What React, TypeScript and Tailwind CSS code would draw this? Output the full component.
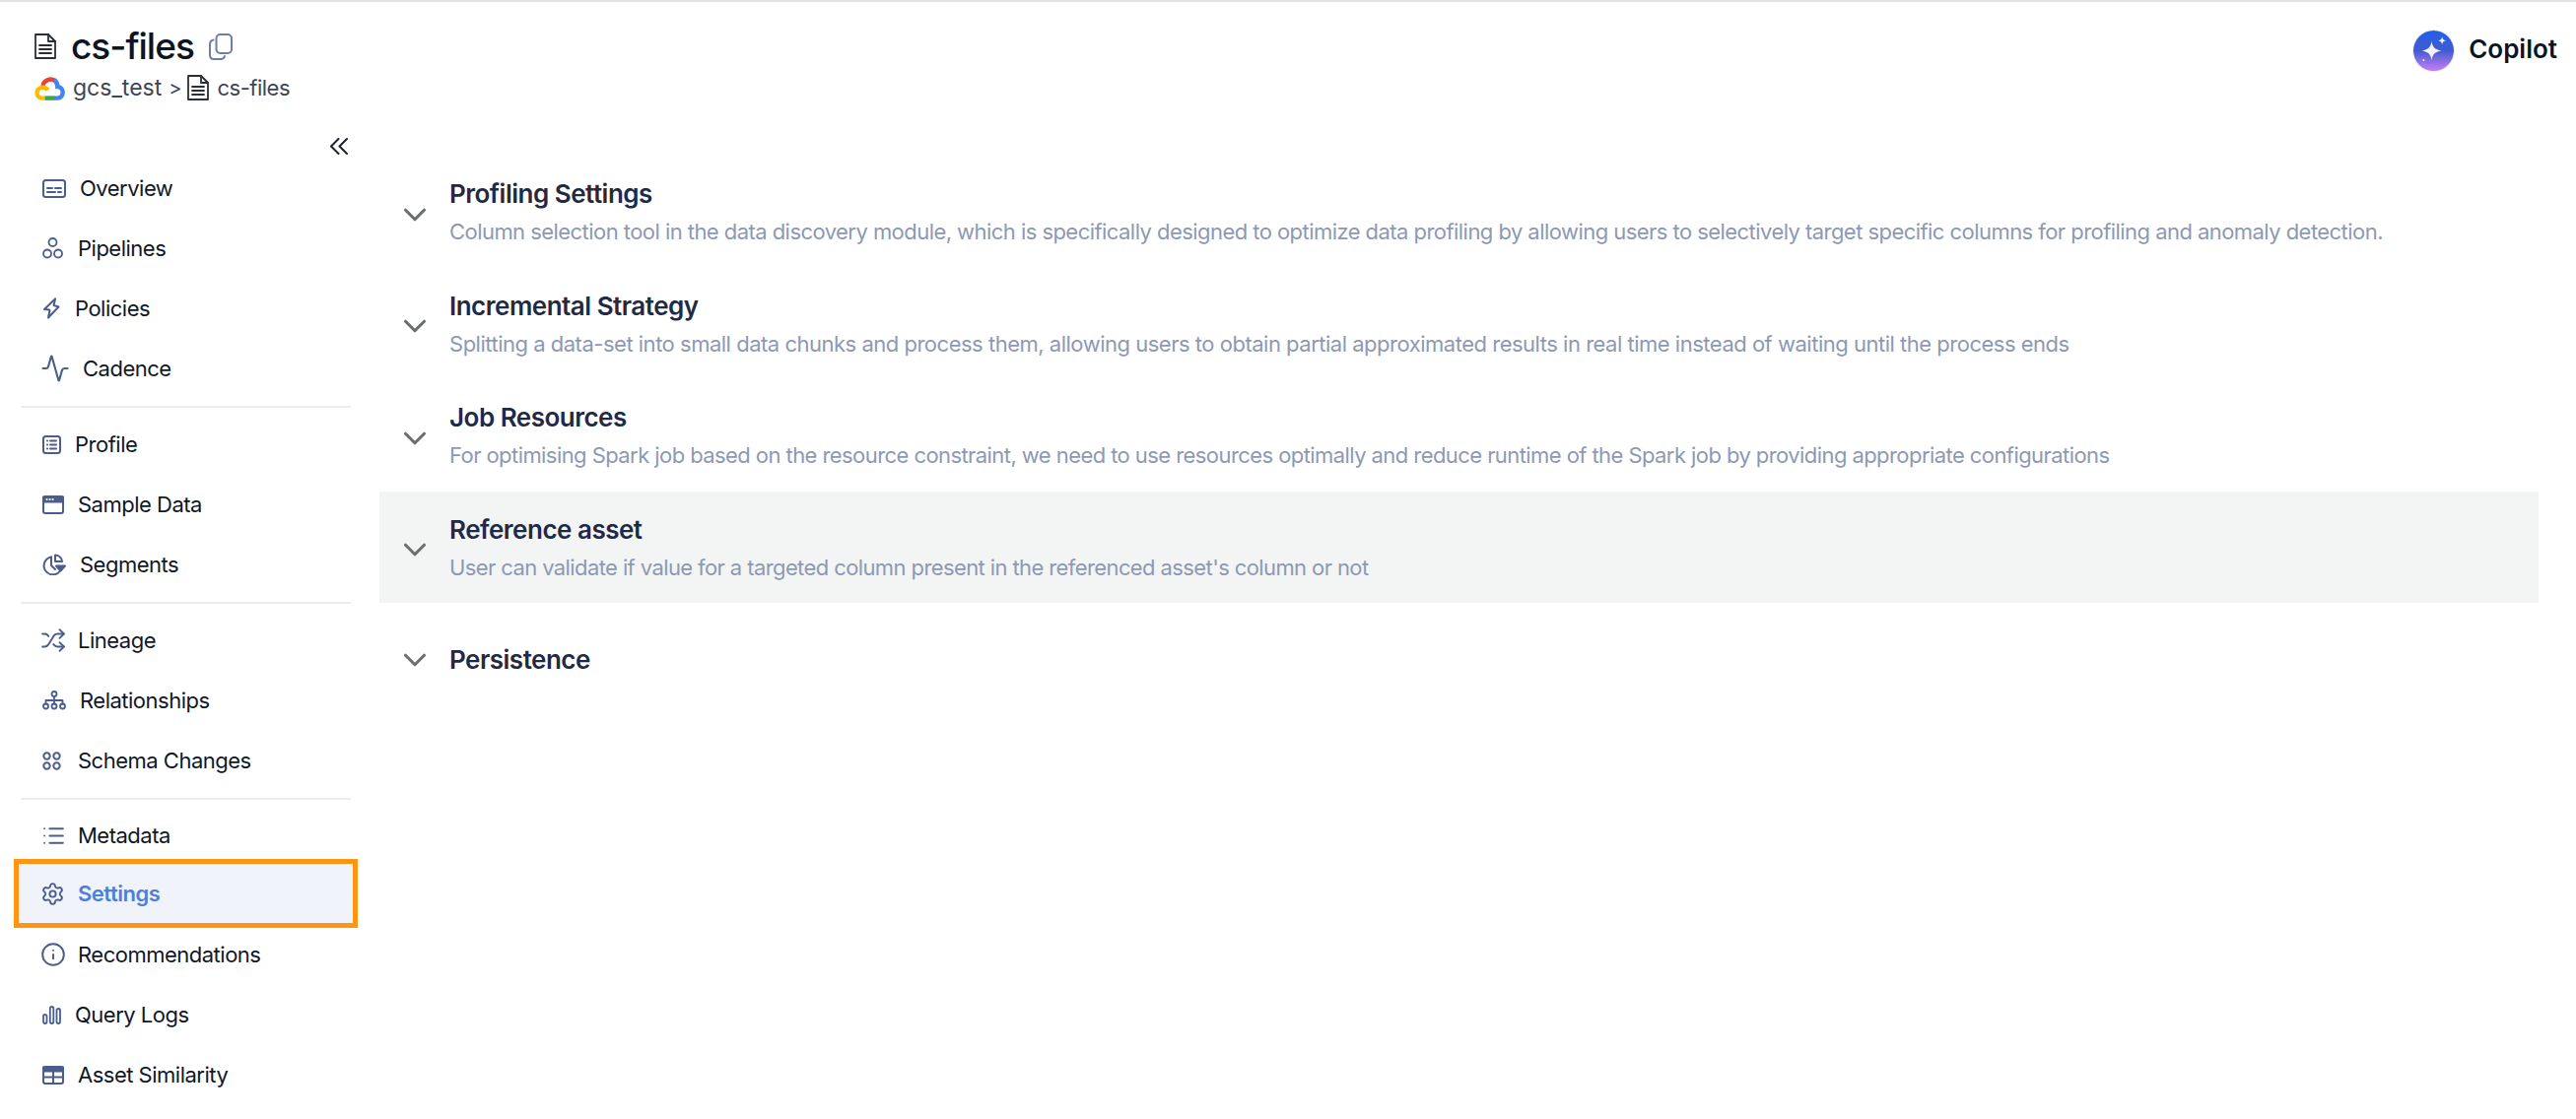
import React from "react";
import { Activity, ChevronDown, Info, List, Settings, Shuffle } from "lucide-react";

const iconBase = {
  fill: "none",
  stroke: "currentColor",
  strokeWidth: 2,
  strokeLinecap: "round" as const,
  strokeLinejoin: "round" as const,
  viewBox: "0 0 24 24",
};

const DocIcon = ({ className }: { className: string }) => (
  <svg {...iconBase} viewBox="0 0 22 26" strokeWidth={1.8} className={className}>
    <path d="M1 1h13l7 7v17H1z" />
    <path d="M14 1v7h7" />
    <path d="M5 12h12M5 16h12M5 20h12" />
  </svg>
);

const CopyIcon = () => (
  <svg {...iconBase} viewBox="0 0 24 27" className="w-[24px] h-[27px] text-[#6f7ea6]">
    <rect x="7.5" y="1" width="15.5" height="19" rx="4" />
    <path d="M4.5 6.5C2.300 7 1 8.500 1 11v11c0 2.500 1.500 4 4 4h7c2 0 3.500-1 4-3" />
  </svg>
);

const CollapseIcon = () => (
  <svg {...iconBase} viewBox="0 0 18 17" className="w-[18px] h-[17px]">
    <path d="M8.500 1 1 8.500 8.500 16" />
    <path d="M17 1 9.500 8.500 17 16" />
  </svg>
);

const GoogleCloud = () => (
  <svg viewBox="0 0 32 26" fill="none" strokeWidth="4.6" className="w-[31px] h-[25px]">
    <path d="M8.500 12A8.500 8.500 0 0 1 22.500 5.800" stroke="#ea4335" />
    <path d="M20.500 4.300A8.500 8.500 0 0 1 24.200 11.500C31.500 11.500 31.500 23.500 24.200 23.500H20" stroke="#4285f4" />
    <path d="M21 23.500H10.500" stroke="#34a853" />
    <path d="M11 23.500H8C1 23.500 .500 13 8 12.200C10.500 12 12.500 13 14 15" stroke="#fbbc05" />
  </svg>
);

const CopilotIcon = () => (
  <div className="w-[41px] h-[41px] rounded-full bg-gradient-to-b from-[#1f5fe6] via-[#3f5bd0] to-[#c77cf5] flex items-center justify-center shadow-[0_0_0_1px_#efe4ff]">
    <svg viewBox="0 0 24 24" fill="#f3f0ff" className="w-[30px] h-[30px]">
      <path d="M10 4.500c.8 5 2.500 6.800 8 7.800-5.500 1-7.200 2.800-8 7.800-.8-5-2.500-6.800-8-7.800 5.500-1 7.200-2.800 8-7.800z" />
      <path d="M18.500 1c.3 2 1 2.800 3.200 3.200-2.200.4-2.900 1.200-3.200 3.200-.3-2-1-2.800-3.200-3.200 2.200-.4 2.900-1.200 3.200-3.200z" />
      <circle cx="3.500" cy="20" r=".8" />
    </svg>
  </div>
);

const OverviewIcon = () => (
  <svg {...iconBase} viewBox="0 0 24 19" className="w-[24px] h-[19px]">
    <rect x="1" y="1" width="22" height="17" rx="2.500" />
    <path d="M5 9h5M13 9h6M5 13h8M16 13h3" />
  </svg>
);
const PipelinesIcon = () => (
  <svg {...iconBase} viewBox="0 0 21 22" strokeWidth={1.8} className="w-[21px] h-[22px]">
    <circle cx="10.500" cy="5" r="4" />
    <circle cx="5" cy="16.500" r="4" />
    <circle cx="16" cy="16.500" r="4" />
  </svg>
);
const PoliciesIcon = () => (
  <svg {...iconBase} viewBox="0 0 18 22" className="w-[18px] h-[22px]">
    <path d="M13 1.500 2 12l5 .5" />
    <path d="M13 1.500 11.500 8l5 1.500L6 20.500 7.500 13" />
  </svg>
);
const ProfileIcon = () => (
  <svg {...iconBase} viewBox="0 0 19 19" className="w-[19px] h-[19px]">
    <rect x="1" y="1" width="17" height="17" rx="2.500" />
    <path d="M8 5.500h6M8 9.500h6M8 13.500h6M5 5.500h.1M5 9.500h.1M5 13.500h.1" />
  </svg>
);
const SampleIcon = () => (
  <svg {...iconBase} viewBox="0 0 22 19" className="w-[22px] h-[19px]">
    <rect x="1" y="1" width="20" height="17" rx="2" />
    <path d="M1 1.500h20v5H1z" fill="currentColor" />
    <path d="M4.500 4h.1M7.500 4h.1M10.500 4h.1" stroke="#fff" />
  </svg>
);
const SegmentsIcon = () => (
  <svg {...iconBase} viewBox="0 0 24 22" className="w-[24px] h-[22px]">
    <path d="M9 3.500a9 9 0 1 0 9 14" />
    <path d="M13 1.500c3.500 0 6.500 2.500 7 6.500h-7z" />
    <path d="M14 12.500h9l-4.500 5z" fill="currentColor" />
    <path d="M9 3.500v8.500l4 4" />
  </svg>
);
const RelationshipsIcon = () => (
  <svg {...iconBase} viewBox="0 0 24 20" strokeWidth={1.8} className="w-[24px] h-[20px]">
    <circle cx="12" cy="3.500" r="2.500" />
    <circle cx="3.500" cy="16" r="2.500" />
    <circle cx="12" cy="16" r="2.500" />
    <circle cx="20.500" cy="16" r="2.500" />
    <path d="M12 6v7.500M3.500 13.500V10h17v3.500" />
  </svg>
);
const SchemaIcon = () => (
  <svg {...iconBase} viewBox="0 0 19 19" className="w-[19px] h-[19px]">
    <circle cx="4.500" cy="4.500" r="3.200" />
    <circle cx="14.500" cy="4.500" r="3.200" />
    <circle cx="4.500" cy="14.500" r="3.200" />
    <circle cx="14.500" cy="14.500" r="3.200" />
  </svg>
);
const BarsIcon = () => (
  <svg {...iconBase} viewBox="0 0 19 19" strokeWidth={1.8} className="w-[19px] h-[19px]">
    <rect x="1" y="9" width="3.500" height="9" rx="1.700" />
    <rect x="7.800" y="1" width="3.500" height="17" rx="1.700" />
    <rect x="14.500" y="3" width="3.500" height="15" rx="1.700" />
  </svg>
);
const TableIcon = () => (
  <svg {...iconBase} viewBox="0 0 22 19" className="w-[22px] h-[19px]">
    <rect x="1" y="1" width="20" height="17" rx="2" />
    <path d="M1 1.500h20v4H1z" fill="currentColor" />
    <path d="M1 11.500h20M11 5.500V18" />
  </svg>
);

type NavItem = { label: string; icon: React.ReactNode; box: string; active?: boolean };

const groups: { items: NavItem[]; rule: string }[] = [
  {
    rule: "mb-[8px]",
    items: [
      { label: "Overview", icon: <OverviewIcon />, box: "w-[38px]" },
      { label: "Pipelines", icon: <PipelinesIcon />, box: "w-[36px]" },
      { label: "Policies", icon: <PoliciesIcon />, box: "w-[33px]" },
      { label: "Cadence", icon: <Activity size={30} strokeWidth={1.7} className="-ml-[2px]" />, box: "w-[41px]" },
    ],
  },
  {
    rule: "mb-[8px]",
    items: [
      { label: "Profile", icon: <ProfileIcon />, box: "w-[33px]" },
      { label: "Sample Data", icon: <SampleIcon />, box: "w-[36px]" },
      { label: "Segments", icon: <SegmentsIcon />, box: "w-[38px]" },
    ],
  },
  {
    rule: "mb-[7px]",
    items: [
      { label: "Lineage", icon: <Shuffle size={26} strokeWidth={1.8} className="-ml-[2px]" />, box: "w-[36px]" },
      { label: "Relationships", icon: <RelationshipsIcon />, box: "w-[38px]" },
      { label: "Schema Changes", icon: <SchemaIcon />, box: "w-[36px]" },
    ],
  },
];

const bottomItems: NavItem[] = [
  { label: "Metadata", icon: <List size={25} strokeWidth={1.8} className="-ml-[1px]" />, box: "w-[36px]" },
  { label: "Settings", icon: <Settings size={25} strokeWidth={1.8} className="-ml-[2px]" />, box: "w-[36px]", active: true },
  { label: "Recommendations", icon: <Info size={26} strokeWidth={1.8} className="-ml-[2px]" />, box: "w-[36px]" },
  { label: "Query Logs", icon: <BarsIcon />, box: "w-[33px]" },
  { label: "Asset Similarity", icon: <TableIcon />, box: "w-[36px]" },
];

const NavRow = ({ item }: { item: NavItem }) => (
  <div
    className={
      item.active
        ? "flex items-center h-[60px] -mx-[1px] pl-[24px] pt-[1px] -mt-[3px] mb-[3px] bg-[#f0f3f9] text-[#4d7fe0] font-semibold outline-[5px] outline-solid outline-[#ff9510]"
        : "flex items-center h-[58px] pl-[23px] mb-[3px] text-[#101828]"
    }
  >
    <span className={`shrink-0 text-[#4a5d8c] flex items-center ${item.box}`}>{item.icon}</span>
    <span>{item.label}</span>
  </div>
);

const sections = [
  {
    title: "Profiling Settings",
    tracking: "tracking-[-0.55px]",
    desc: "Column selection tool in the data discovery module, which is specifically designed to optimize data profiling by allowing users to selectively target specific columns for profiling and anomaly detection.",
  },
  {
    title: "Incremental Strategy",
    tracking: "tracking-[-0.49px]",
    desc: "Splitting a data-set into small data chunks and process them, allowing users to obtain partial approximated results in real time instead of waiting until the process ends",
  },
  {
    title: "Job Resources",
    tracking: "tracking-[-0.57px]",
    desc: "For optimising Spark job based on the resource constraint, we need to use resources optimally and reduce runtime of the Spark job by providing appropriate configurations",
  },
  {
    title: "Reference asset",
    tracking: "tracking-[-0.6px]",
    desc: "User can validate if value for a targeted column present in the referenced asset's column or not",
    hover: true,
  },
  { title: "Persistence", tracking: "", last: true },
];

export default function App() {
  return (
    <div className="w-[2614px] h-[1136px] overflow-hidden bg-white border-t-2 border-[#e3e3e3] font-['Inter',sans-serif]">
      <header className="flex justify-between h-[128px] pl-[35px] pr-[19px] pt-[28px]">
        <div>
          <div className="flex items-center h-[34px]">
            <DocIcon className="w-[22px] h-[26px] text-[#2a2f36]" />
            <h1 className="ml-[15px] text-[37px] font-medium text-[#0d1520] tracking-[-1px]">cs-files</h1>
            <span className="ml-[15px]">
              <CopyIcon />
            </span>
          </div>
          <div className="flex items-center mt-[8px] text-[23px] text-[#3d4654]">
            <GoogleCloud />
            <span className="ml-[8px]">gcs_test</span>
            <span className="ml-[7px] text-[20px]">&gt;</span>
            <span className="ml-[6px]">
              <DocIcon className="w-[22px] h-[26px] text-[#2a2f36]" />
            </span>
            <span className="ml-[8px] text-[22px] tracking-[-0.5px]">cs-files</span>
          </div>
        </div>
        <div className="flex items-center gap-[15px] h-[42px]">
          <CopilotIcon />
          <span className="text-[26px] font-semibold text-[#0d1520] -mt-[3px]">Copilot</span>
        </div>
      </header>

      <div className="flex">
        <aside className="w-[385px] shrink-0 pl-[20px] pr-[28px] text-[22px] tracking-[-0.5px]">
          <div className="flex justify-end h-[32px] pt-[10px] pr-[4px] text-[#1c2430]">
            <CollapseIcon />
          </div>
          {groups.map((g) => (
            <div key={g.items[0].label}>
              {g.items.map((item) => (
                <NavRow key={item.label} item={item} />
              ))}
              <div className={`h-[2px] bg-[#ececec] mx-[1px] mt-[9px] ${g.rule}`} />
            </div>
          ))}
          {bottomItems.map((item) => (
            <NavRow key={item.label} item={item} />
          ))}
        </aside>

        <main className="w-[2191px] pt-[28px]">
          {sections.map((s) => (
            <div
              key={s.title}
              className={`flex items-center h-[113.500px] pl-[17px] gap-[16px] ${s.hover ? "bg-[#f3f5f5]" : ""} ${s.last ? "pt-[2px]" : ""}`}
            >
              <ChevronDown size={38} strokeWidth={2} className={`text-[#6b6f72] ${s.last ? "" : "mt-[6px]"}`} />
              <div>
                <div className="text-[26px] font-semibold text-[#1f2a44] tracking-[-0.5px]">{s.title}</div>
                {s.desc && <div className={`mt-[3px] text-[22px] text-[#8d99b3] ${s.tracking}`}>{s.desc}</div>}
              </div>
            </div>
          ))}
        </main>
      </div>
    </div>
  );
}
